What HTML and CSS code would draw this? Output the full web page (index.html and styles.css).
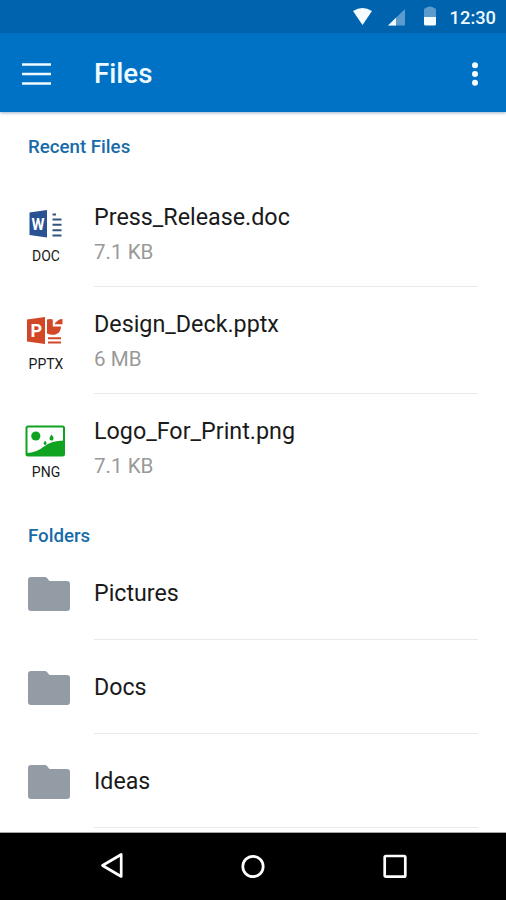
FILE: index.html
```html
<!DOCTYPE html>
<html lang="en">
<head>
<meta charset="utf-8">
<title>Files</title>
<link rel="stylesheet" href="styles.css">
</head>
<body>
<div class="screen">
  <div class="status">
    <svg class="status-icons" width="96" height="33" viewBox="0 0 96 33">
      <path d="M3 11Q12.500 5 22 11L12.500 25Z" fill="#f5fcff"/>
      <path d="M55 9V25.500H38Z" fill="#5b9ccc"/>
      <path d="M46 17.700V25.500H38Z" fill="#f5fcff"/>
      <path d="M74 17V9.500Q74 8 76 8Q77 6.500 80 6.500Q83 6.500 84 8Q86 8 86 9.500V17Z" fill="#5b9ccc"/>
      <path d="M74 17H86V24Q86 25.500 84.500 25.500H75.500Q74 25.500 74 24Z" fill="#f5fcff"/>
    </svg>
    <span class="clock">12:30</span>
  </div>
  <header class="appbar">
    <svg width="29" height="24" viewBox="0 0 29 24"><path d="M0 2.500H29M0 12H29M0 21.500H29" stroke="#eefaff" stroke-width="2.600"/></svg>
    <h1 class="title">Files</h1>
    <svg width="8" height="26" viewBox="0 0 8 26" fill="#f5fcff"><circle cx="4" cy="4.200" r="3"/><circle cx="4" cy="13" r="3"/><circle cx="4" cy="21.800" r="3"/></svg>
  </header>
  <main class="content">
    <h2 class="section recent">Recent Files</h2>
    <ul class="list">
      <li class="file">
        <div class="type">
          <svg class="type-icon" width="42" height="34" viewBox="0 0 42 34">
            <path d="M5.500 5.500L23 3V30.500L5.500 28Z" fill="#295292"/>
            <text class="mark" x="14" y="22.500" font-size="16" textLength="13" lengthAdjust="spacingAndGlyphs">W</text>
            <path d="M28.500 7.500H32M28.500 12.500H37.500M28.500 17.800H37.500M28.500 23.200H37.500M28.500 28.400H37.500" stroke="#33547f" stroke-width="2"/>
          </svg>
          <span class="ext">DOC</span>
        </div>
        <div class="info"><span class="name">Press_Release.doc</span><span class="size">7.1 KB</span></div>
      </li>
      <li class="file pptx">
        <div class="type">
          <svg class="type-icon" width="42" height="34" viewBox="0 0 42 34">
            <path d="M3 5.500L21 3V30L3 27.500Z" fill="#d24726"/>
            <text class="mark" x="12.200" y="22.500" font-size="18">P</text>
            <path d="M23 5.500Q26 4.500 28.800 5.500V12.500H37Q37 18.500 31.500 20.500Q27 21.500 23 19.500Z" fill="#d24726"/>
            <path d="M31 10.300V9L34.500 6Q36 5 38.500 5V10.300Z" fill="#d24726"/>
            <path d="M24 24.200H37M24 28.500H37" stroke="#d24726" stroke-width="1.900"/>
          </svg>
          <span class="ext">PPTX</span>
        </div>
        <div class="info"><span class="name">Design_Deck.pptx</span><span class="size">6 MB</span></div>
      </li>
      <li class="file png">
        <div class="type">
          <svg class="type-icon" width="42" height="34" viewBox="0 0 42 34">
            <rect x="2.500" y="2.600" width="37.500" height="28.800" rx="1.500" fill="#fff" stroke="#10a321" stroke-width="2"/>
            <circle cx="11.800" cy="12" r="4.600" fill="#10a321"/>
            <path d="M27.500 10.500Q30 13 29.500 15Q28.800 17 27.200 16.600Q25 16 25.500 14Q26 12.500 27.500 10.500ZM21 16.500Q23 18.500 22.500 20Q21.500 21.500 20 20.500Q19 19 21 16.500Z" fill="#10a321"/>
            <path d="M3 31V29Q12 29 20 22.500Q27 16.500 40 16.500V31Z" fill="#10a321"/>
          </svg>
          <span class="ext">PNG</span>
        </div>
        <div class="info"><span class="name">Logo_For_Print.png</span><span class="size">7.1 KB</span></div>
      </li>
    </ul>
    <h2 class="section folders">Folders</h2>
    <ul class="list">
      <li class="folder">
        <svg class="folder-icon" width="42" height="34" viewBox="0 0 42 34"><path d="M3 0H17Q18.300 0 19 1L21.500 4H39Q42 4 42 7V31Q42 34 39 34H3Q0 34 0 31V3Q0 0 3 0Z"/></svg>
        <div class="folder-name">Pictures</div>
      </li>
      <li class="folder">
        <svg class="folder-icon" width="42" height="34" viewBox="0 0 42 34"><path d="M3 0H17Q18.300 0 19 1L21.500 4H39Q42 4 42 7V31Q42 34 39 34H3Q0 34 0 31V3Q0 0 3 0Z"/></svg>
        <div class="folder-name">Docs</div>
      </li>
      <li class="folder">
        <svg class="folder-icon" width="42" height="34" viewBox="0 0 42 34"><path d="M3 0H17Q18.300 0 19 1L21.500 4H39Q42 4 42 7V31Q42 34 39 34H3Q0 34 0 31V3Q0 0 3 0Z"/></svg>
        <div class="folder-name">Ideas</div>
      </li>
    </ul>
  </main>
  <nav class="navbar">
    <svg width="24" height="28" viewBox="0 0 24 28"><path d="M21.200 2.500V24.500L2.500 13.500Z"/></svg>
    <svg width="24" height="28" viewBox="0 0 24 28"><circle cx="11" cy="14.500" r="10.200"/></svg>
    <svg width="24" height="28" viewBox="0 0 24 28"><rect x="1.700" y="4" width="20.600" height="20.600" rx="1.200"/></svg>
  </nav>
</div>
</body>
</html>
```
FILE: styles.css
```css
* { box-sizing: border-box; }
body {
  margin: 0;
  background: #fff;
  font-family: Roboto, sans-serif;
  color: #1a1a1a;
}
.screen {
  display: flex;
  flex-direction: column;
  width: 506px;
  height: 900px;
  overflow: hidden;
}
.status {
  display: flex;
  flex: none;
  justify-content: flex-end;
  height: 33px;
  padding-right: 10px;
  background: #0063ad;
}
.clock {
  width: 50px;
  font-size: 18.300px;
  font-weight: 500;
  line-height: 35px;
  text-align: right;
  color: #eefaff;
}
.appbar {
  display: flex;
  flex: none;
  align-items: center;
  height: 79px;
  padding: 3px 27px 0 22px;
  background: #0072c6;
  box-shadow: 0 1px 3px rgba(0, 60, 120, .4);
  z-index: 1;
}
.title {
  flex: 1;
  margin: 0 0 0 43px;
  font-size: 27.700px;
  font-weight: 500;
  line-height: 36px;
  color: #eefaff;
}
.content {
  flex: none;
  height: 721px;
  overflow: hidden;
  border-bottom: 1px solid #a5a5a5;
}
.section {
  margin: 0;
  padding-left: 28px;
  font-size: 18.700px;
  font-weight: 500;
  color: #176ba8;
}
.recent { height: 68px; line-height: 70px; }
.folders { height: 45px; line-height: 70px; }
.list { margin: 0; padding: 0; list-style: none; }
.file { display: flex; height: 107px; }
.type {
  display: flex;
  flex-direction: column;
  align-items: center;
  width: 44px;
  margin-left: 24px;
  padding-top: 27px;
}
.type-icon { display: block; align-self: flex-start; }
.mark {
  font-family: Roboto, sans-serif;
  font-weight: 700;
  text-anchor: middle;
  fill: #fff;
}
.ext {
  margin-top: 7px;
  font-size: 14px;
  line-height: 17px;
}
.pptx .ext { margin-top: 8px; }
.png .type { padding-top: 30px; }
.png .ext { margin-top: 6px; }
.info {
  display: flex;
  flex-direction: column;
  width: 384px;
  margin-left: 26px;
  padding-top: 21px;
  border-bottom: 1px solid #e9e9e9;
}
.file:last-child .info { border-bottom: 0; }
.name { font-size: 23.300px; line-height: 32px; }
.size { margin-top: 3px; font-size: 20.600px; line-height: 32px; color: #999; }
.folder { display: flex; height: 94px; padding-left: 28px; }
.folder-icon { margin-top: 31px; fill: #939ba5; }
.folder-name {
  width: 384px;
  margin-left: 24px;
  border-bottom: 1px solid #e9e9e9;
  font-size: 23.200px;
  line-height: 95px;
}
.navbar {
  display: flex;
  flex: 1;
  align-items: flex-start;
  justify-content: space-between;
  padding: 19px 99px 0 100px;
  background: #000;
}
.navbar svg {
  overflow: visible;
  fill: none;
  stroke: #fff;
  stroke-width: 2.700;
  stroke-linejoin: round;
}
```
